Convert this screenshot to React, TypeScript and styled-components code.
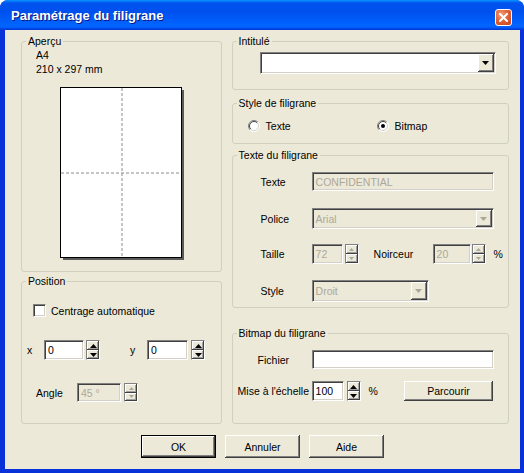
import styled, { createGlobalStyle } from "styled-components";

const face = "#ece9d8";
const grayText = "#aca899";

const GlobalStyle = createGlobalStyle`
  body {
    margin: 0;
    background: #fff;
    font-family: "Liberation Sans", Arial, sans-serif;
    font-size: 10.5px;
    color: #000;
  }
`;

const Window = styled.div`
  width: 524px;
  height: 473px;
  display: flex;
  flex-direction: column;
  background: #0831d9;
  border-radius: 8px 8px 0 0;
  overflow: hidden;
`;

const TitleBar = styled.div`
  height: 30px;
  flex: none;
  display: flex;
  align-items: center;
  justify-content: space-between;
  box-sizing: border-box;
  padding: 0 12px 0 11px;
  background: linear-gradient(
    180deg,
    #0997ff 0%,
    #0053ee 10%,
    #0050ee 40%,
    #0066ff 86%,
    #005bff 92%,
    #003dd7 97%,
    #003dd7 100%
  );
  color: #fff;
  font: bold 13px "Liberation Sans", Arial, sans-serif;
  text-shadow: 1px 1px #0a1883;
`;

const CloseButton = styled.div`
  width: 17px;
  height: 17px;
  box-sizing: border-box;
  align-self: flex-start;
  margin-top: 9px;
  display: flex;
  align-items: center;
  justify-content: center;
  border: 1px solid #fff;
  border-radius: 3px;
  background: radial-gradient(circle at 35% 30%, #f0a07c 0%, #e0643a 45%, #c6401c 100%);
`;

const Client = styled.div`
  flex: 1;
  margin: 0 4px 4px 5px;
  background: ${face};
  box-sizing: border-box;
  padding: 11px 11px 0 16px;
  display: flex;
  flex-direction: column;
`;

const Columns = styled.div`
  display: flex;
  gap: 10px;
`;

const Column = styled.div<{ $w: number }>`
  width: ${({ $w }) => $w}px;
  display: flex;
  flex-direction: column;
`;

const Group = styled.div<{ $h: number; $mt?: number }>`
  position: relative;
  box-sizing: border-box;
  height: ${({ $h }) => $h}px;
  margin-top: ${({ $mt }) => $mt ?? 0}px;
  border: 1px solid #d0d0bf;
  border-radius: 3px;
`;

const Caption = styled.span`
  position: absolute;
  top: -7px;
  left: 4px;
  padding: 0 2px;
  line-height: 13px;
  background: ${face};
  white-space: nowrap;
`;

const Info = styled.div`
  margin-top: 6px;
  padding-left: 14px;
  line-height: 14px;
`;

const Preview = styled.svg`
  display: block;
  margin: 11px 0 0 38px;
`;

const Row = styled.div<{ $mt: number; $pl: number; $h: number; $pr?: number }>`
  display: flex;
  align-items: center;
  margin-top: ${({ $mt }) => $mt}px;
  padding-left: ${({ $pl }) => $pl}px;
  padding-right: ${({ $pr }) => $pr ?? 0}px;
  height: ${({ $h }) => $h}px;
`;

const Label = styled.span<{ $w?: number; $ml?: number; $off?: boolean }>`
  flex: none;
  width: ${({ $w }) => ($w ? `${$w}px` : "auto")};
  margin-left: ${({ $ml }) => $ml ?? 0}px;
  white-space: nowrap;
  color: ${({ $off }) => ($off ? grayText : "#000")};
`;

const Field = styled.div<{ $w: number; $h: number; $off?: boolean }>`
  flex: none;
  width: ${({ $w }) => $w}px;
  height: ${({ $h }) => $h}px;
  box-sizing: border-box;
  display: flex;
  align-items: center;
  padding-left: 3px;
  background: ${({ $off }) => ($off ? face : "#fff")};
  color: ${({ $off }) => ($off ? grayText : "#000")};
  border-top: 1px solid #808080;
  border-left: 1px solid #808080;
  border-bottom: 1px solid #fff;
  border-right: 1px solid #fff;
  box-shadow: inset 1px 1px #404040, inset -1px -1px #d4d0c8;
  white-space: nowrap;
  overflow: hidden;
`;

const DropButton = styled.div`
  margin: 1px 1px 1px auto;
  align-self: stretch;
  width: 16px;
  display: flex;
  align-items: center;
  justify-content: center;
  background: ${face};
  box-shadow: inset -1px -1px #404040, inset 1px 1px #fff, inset -2px -2px #808080;
`;

const Spin = styled.div<{ $h: number; $ml?: number }>`
  flex: none;
  width: 14px;
  height: ${({ $h }) => $h}px;
  margin-left: ${({ $ml }) => $ml ?? 2}px;
  display: flex;
  flex-direction: column;
  box-sizing: border-box;
  border: 1px solid #808080;
  border-right-color: #fff;
  border-bottom-color: #fff;
`;

const SpinHalf = styled.div`
  flex: 1;
  display: flex;
  align-items: center;
  justify-content: center;
  background: ${face};
  box-shadow: inset -1px -1px #404040, inset 1px 1px #fff, inset -2px -2px #a0a0a0;
`;

const CheckBox = styled.div`
  flex: none;
  width: 13px;
  height: 13px;
  box-sizing: border-box;
  background: #fff;
  border-top: 1px solid #808080;
  border-left: 1px solid #808080;
  border-bottom: 1px solid #fff;
  border-right: 1px solid #fff;
  box-shadow: inset 1px 1px #404040, inset -1px -1px #d4d0c8;
`;

const RadioItem = styled.div<{ $w?: number }>`
  display: flex;
  align-items: center;
  gap: 6px;
  width: ${({ $w }) => ($w ? `${$w}px` : "auto")};
`;

const ButtonRow = styled.div`
  display: flex;
  gap: 9px;
  margin-top: 11px;
  padding-left: 120px;
`;

const Button = styled.div<{ $w?: number; $h?: number; $default?: boolean; $ml?: string }>`
  flex: none;
  width: ${({ $w }) => $w ?? 75}px;
  height: ${({ $h }) => $h ?? 23}px;
  margin-left: ${({ $ml }) => $ml ?? "0"};
  box-sizing: border-box;
  display: flex;
  align-items: center;
  justify-content: center;
  background: ${face};
  border: ${({ $default }) => ($default ? "1px solid #000" : "none")};
  box-shadow: inset -1px -1px #404040, inset 1px 1px #fff, inset -2px -2px #808080;
`;

const Arrow = ({ dir, off, w = 7 }: { dir: "up" | "down"; off?: boolean; w?: number }) => {
  const h = Math.ceil(w / 2);
  const d = dir === "up" ? `M${w / 2} 0 L${w} ${h} H0Z` : `M0 0 H${w} L${w / 2} ${h}Z`;
  return (
    <svg width={w} height={h} viewBox={`0 0 ${w} ${h}`}>
      <path d={d} fill={off ? grayText : "#000"} />
    </svg>
  );
};

const Spinner = ({ h, ml, off }: { h: number; ml?: number; off?: boolean }) => (
  <Spin $h={h} $ml={ml}>
    <SpinHalf>
      <Arrow dir="up" w={off ? 5 : 7} off={off} />
    </SpinHalf>
    <SpinHalf>
      <Arrow dir="down" w={off ? 5 : 7} off={off} />
    </SpinHalf>
  </Spin>
);

const Combo = ({ w, h, value, off }: { w: number; h: number; value?: string; off?: boolean }) => (
  <Field $w={w} $h={h} $off={off}>
    {value}
    <DropButton>
      <Arrow dir="down" w={7} off={off} />
    </DropButton>
  </Field>
);

const Radio = ({ checked }: { checked?: boolean }) => (
  <svg width="12" height="12" viewBox="0 0 12 12">
    <circle cx="6" cy="6" r="5.5" fill="#fff" />
    <path d="M2.1 9.9 A5.5 5.5 0 0 1 9.9 2.1" fill="none" stroke="#808080" />
    <path d="M2.8 9.2 A4.5 4.5 0 0 1 9.2 2.8" fill="none" stroke="#404040" />
    <path d="M9.9 2.1 A5.5 5.5 0 0 1 2.1 9.9" fill="none" stroke="#fff" />
    <path d="M9.2 2.8 A4.5 4.5 0 0 1 2.8 9.2" fill="none" stroke="#d4d0c8" />
    {checked && <circle cx="6" cy="6" r="2" fill="#000" />}
  </svg>
);

const PagePreview = () => (
  <Preview width="125" height="174" viewBox="0 0 125 174">
    <rect x="3" y="3" width="121" height="170" fill="#5a5a5a" />
    <rect x="0.5" y="0.5" width="121" height="170" fill="#fff" stroke="#000" />
    <line x1="62" y1="1" x2="62" y2="170" stroke="#8c8c8c" strokeDasharray="3 2" />
    <line x1="1" y1="86" x2="121" y2="86" stroke="#8c8c8c" strokeDasharray="3 2" />
  </Preview>
);

export default function App() {
  return (
    <>
      <GlobalStyle />
      <Window>
        <TitleBar>
          <span>Paramétrage du filigrane</span>
          <CloseButton>
            <svg width="9" height="9" viewBox="0 0 9 9">
              <path d="M1 1 L8 8 M8 1 L1 8" stroke="#fff" strokeWidth="2" strokeLinecap="square" />
            </svg>
          </CloseButton>
        </TitleBar>
        <Client>
          <Columns>
            <Column $w={201}>
              <Group $h={231}>
                <Caption>Aperçu</Caption>
                <Info>
                  <div>A4</div>
                  <div>210 x 297 mm</div>
                </Info>
                <PagePreview />
              </Group>
              <Group $h={143} $mt={9}>
                <Caption>Position</Caption>
                <Row $mt={22} $pl={11} $h={13}>
                  <CheckBox />
                  <Label $ml={5}>Centrage automatique</Label>
                </Row>
                <Row $mt={23} $pl={5} $h={20}>
                  <Label $w={17}>x</Label>
                  <Field $w={40} $h={20}>0</Field>
                  <Spinner h={20} ml={2} />
                  <Label $w={17} $ml={30}>y</Label>
                  <Field $w={41} $h={20}>0</Field>
                  <Spinner h={20} ml={3} />
                </Row>
                <Row $mt={23} $pl={14} $h={19}>
                  <Label $w={41}>Angle</Label>
                  <Field $w={44} $h={19} $off>
                    45 °
                  </Field>
                  <Spinner h={19} ml={3} off />
                </Row>
              </Group>
            </Column>
            <Column $w={278}>
              <Group $h={49}>
                <Caption>Intitulé</Caption>
                <Row $mt={10} $pl={27} $h={22}>
                  <Combo w={236} h={22} />
                </Row>
              </Group>
              <Group $h={41} $mt={13}>
                <Caption>Style de filigrane</Caption>
                <Row $mt={15} $pl={15} $h={13}>
                  <RadioItem $w={129}>
                    <Radio />
                    <span>Texte</span>
                  </RadioItem>
                  <RadioItem>
                    <Radio checked />
                    <span>Bitmap</span>
                  </RadioItem>
                </Row>
              </Group>
              <Group $h={153} $mt={11}>
                <Caption>Texte du filigrane</Caption>
                <Row $mt={16} $pl={28} $h={19}>
                  <Label $w={51}>Texte</Label>
                  <Field $w={182} $h={19} $off>
                    CONFIDENTIAL
                  </Field>
                </Row>
                <Row $mt={17} $pl={28} $h={21}>
                  <Label $w={51}>Police</Label>
                  <Combo w={182} h={21} value="Arial" off />
                </Row>
                <Row $mt={15} $pl={28} $h={20}>
                  <Label $w={51}>Taille</Label>
                  <Field $w={31} $h={20} $off>
                    72
                  </Field>
                  <Spinner h={20} ml={2} off />
                  <Label $w={59} $ml={15}>
                    Noirceur
                  </Label>
                  <Field $w={38} $h={20} $off>
                    20
                  </Field>
                  <Spinner h={20} ml={1} off />
                  <Label $ml={8}>%</Label>
                </Row>
                <Row $mt={16} $pl={28} $h={22}>
                  <Label $w={51}>Style</Label>
                  <Combo w={117} h={22} value="Droit" off />
                </Row>
              </Group>
              <Group $h={91} $mt={25}>
                <Caption>Bitmap du filigrane</Caption>
                <Row $mt={16} $pl={25} $h={19}>
                  <Label $w={54}>Fichier</Label>
                  <Field $w={182} $h={19} />
                </Row>
                <Row $mt={12} $pl={5} $pr={15} $h={20}>
                  <Label $w={74}>Mise à l'échelle</Label>
                  <Field $w={32} $h={20}>100</Field>
                  <Spinner h={20} ml={3} />
                  <Label $ml={8}>%</Label>
                  <Button $w={89} $h={20} $ml="auto">
                    Parcourir
                  </Button>
                </Row>
              </Group>
            </Column>
          </Columns>
          <ButtonRow>
            <Button $default>OK</Button>
            <Button>Annuler</Button>
            <Button>Aide</Button>
          </ButtonRow>
        </Client>
      </Window>
    </>
  );
}
